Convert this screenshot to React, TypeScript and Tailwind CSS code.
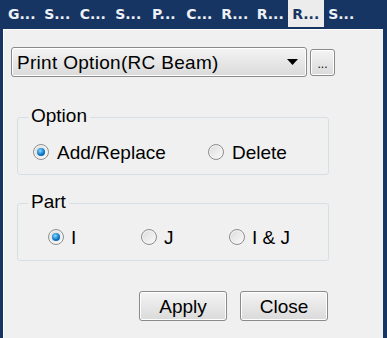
import React from "react";

const Radio = ({ checked }: { checked?: boolean }) => (
  <span className="relative inline-block shrink-0 w-[16px] h-[16px] rounded-full border border-[#8e8f8f] bg-gradient-to-br from-[#dcdcdc] to-[#fafafa] shadow-[inset_0_0_0_1px_#f4f4f4]">
    {checked && (
      <span className="absolute left-[3px] top-[3px] w-[8px] h-[8px] rounded-full bg-[radial-gradient(circle_at_40%_35%,#8ad8ff,#0a78c8_55%,#0b3f7a)]" />
    )}
  </span>
);

const btn =
  "rounded-[3px] border border-[#8a8a8a] bg-gradient-to-b from-[#f4f4f4] to-[#dadada] shadow-[inset_0_0_0_1px_#ffffff]";

export default function App() {
  const tabs = ["G...", "S...", "C...", "S...", "P...", "C...", "R...", "R...", "R...", "S..."];
  return (
    <div
      className="w-[387px] h-[338px] bg-[#163562] flex flex-col overflow-hidden"
      style={{ fontFamily: '"Liberation Sans", Arial, sans-serif' }}
    >
      <div
        className="h-[29px] flex items-stretch pl-[4px]"
        style={{ fontFamily: '"DejaVu Sans", Verdana, sans-serif' }}
      >
        {tabs.map((t, i) => (
          <div
            key={i}
            className={
              i === 8
                ? "w-[35.5px] h-[27px] bg-[#ececec] text-[#163562] flex items-center justify-center text-[14px] font-bold pt-[1px]"
                : "w-[35.5px] h-[27px] text-[#eef1f6] flex items-center justify-center text-[14px] font-bold pt-[1px]"
            }
          >
            {t}
          </div>
        ))}
      </div>
      <div className="ml-[3px] mr-[4px] flex-1 bg-[#f0f0f0] border-l border-t border-[#ffffff] text-black text-[19px] pt-[17px] pl-[7px]">
        <div className="flex items-center gap-[3px]">
          <div className={`w-[296px] h-[30px] ${btn} flex items-center pl-[5px] pr-[8px]`}>
            <span className="flex-1 leading-none tracking-[0.3px]">Print Option(RC Beam)</span>
            <svg width="11" height="6" viewBox="0 0 11 6">
              <path d="M0 0 L11 0 L5.5 6 Z" fill="#000" />
            </svg>
          </div>
          <div className={`w-[25px] h-[27px] ${btn} flex items-end justify-center pb-[5px]`}>
            <span className="text-[12px] leading-none">...</span>
          </div>
        </div>

        <div className="relative mt-[40px] ml-[6px] w-[312px] h-[58px] rounded-[3px] border border-[#d5dfe5]">
          <span className="absolute left-[10px] top-[-14px] bg-[#f0f0f0] px-[3px] text-[19px] leading-[24px]">Option</span>
          <div className="flex items-center h-full pt-[12px] pl-[15px]">
            <Radio checked />
            <span className="ml-[8px] w-[151px] leading-none">Add/Replace</span>
            <Radio />
            <span className="ml-[8px] leading-none">Delete</span>
          </div>
        </div>

        <div className="relative mt-[28px] ml-[6px] w-[312px] h-[58px] rounded-[3px] border border-[#d5dfe5]">
          <span className="absolute left-[10px] top-[-14px] bg-[#f0f0f0] px-[3px] text-[19px] leading-[24px]">Part</span>
          <div className="flex items-center h-full pt-[10px] pl-[30px]">
            <Radio checked />
            <span className="ml-[7px] w-[70px] leading-none">I</span>
            <Radio />
            <span className="ml-[7px] w-[65px] leading-none">J</span>
            <Radio />
            <span className="ml-[7px] leading-none">I &amp; J</span>
          </div>
        </div>

        <div className="flex justify-end gap-[13px] mt-[30px] mr-[55px]">
          <button className={`w-[88px] h-[30px] ${btn} leading-none`}>Apply</button>
          <button className={`w-[88px] h-[30px] ${btn} leading-none`}>Close</button>
        </div>
      </div>
    </div>
  );
}
